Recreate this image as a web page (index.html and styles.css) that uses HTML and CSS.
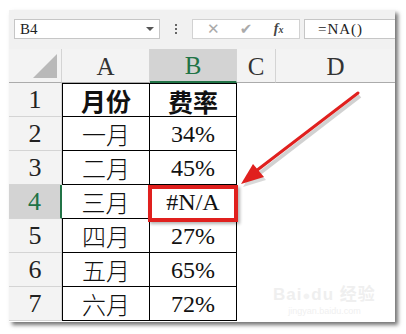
FILE: index.html
```html
<!DOCTYPE html>
<html lang="zh-CN">
<head>
    <meta charset="UTF-8">
    <meta name="viewport" content="width=device-width, initial-scale=1.0">
    <title>NA 函数</title>
    <link rel="stylesheet" href="styles.css">
</head>
<body>
    <div class="panel">
        <div class="toolbar">
            <div class="namebox">
                <span>B4</span>
                <i class="caret"></i>
            </div>
            <div class="dots"><b></b><b></b><b></b></div>
            <div class="btns">
                <span class="ico x">✕</span>
                <span class="ico ok">✔</span>
                <span class="ico fx">f<small>x</small></span>
            </div>
            <div class="formula">=NA()</div>
        </div>

        <div class="sheet">
            <div class="corner"><i></i></div>
            <div class="colhead">A</div>
            <div class="colhead sel">B</div>
            <div class="colhead">C</div>
            <div class="colhead last">D</div>

            <div class="rowhead">1</div>
            <div class="cell a top bold">月份</div>
            <div class="cell b top bold">费率</div>
            <div class="empty"></div><div class="empty"></div>

            <div class="rowhead">2</div>
            <div class="cell a">一月</div>
            <div class="cell b">34%</div>
            <div class="empty"></div><div class="empty"></div>

            <div class="rowhead">3</div>
            <div class="cell a">二月</div>
            <div class="cell b">45%</div>
            <div class="empty"></div><div class="empty"></div>

            <div class="rowhead sel">4</div>
            <div class="cell a nol">三月</div>
            <div class="cell b">#N/A</div>
            <div class="empty"></div><div class="empty"></div>

            <div class="rowhead">5</div>
            <div class="cell a">四月</div>
            <div class="cell b">27%</div>
            <div class="empty"></div><div class="empty"></div>

            <div class="rowhead">6</div>
            <div class="cell a">五月</div>
            <div class="cell b">65%</div>
            <div class="empty"></div><div class="empty"></div>

            <div class="rowhead">7</div>
            <div class="cell a">六月</div>
            <div class="cell b">72%</div>
            <div class="empty"></div><div class="empty"></div>
        </div>

        <div class="redbox"></div>

        <div class="mark">
            <div class="mark-top">Bai<span class="paw">●</span>du 经验</div>
            <div class="mark-sub">jingyan.baidu.com</div>
        </div>
    </div>

    <svg class="arrow" width="406" height="334" viewBox="0 0 406 334">
        <line x1="360" y1="96" x2="260" y2="173" stroke="#000" stroke-opacity="0.18" stroke-width="4"/>
        <polygon points="243,187 255,167 266,180" fill="#000" fill-opacity="0.15"/>
        <line x1="358" y1="93" x2="256" y2="171" stroke="#e0201e" stroke-width="3" stroke-linecap="round"/>
        <polygon points="241,184 253,164 264,177" fill="#e0201e"/>
    </svg>
</body>
</html>
```

FILE: styles.css
```css
* { margin:0; padding:0; box-sizing:border-box;}
body { background:#fff; width:406px; height:334px; overflow:hidden; position:relative; font-family:"Liberation Serif", "Times New Roman", serif;}

.panel { position:relative; margin:10px 0 0 9px; width:386px; height:312px; background:#fff; overflow:hidden; box-shadow:3px 3px 4px rgba(0,0,0,0.55);}

/* formula bar */
.toolbar { height:39px; background:#f1f1f1; display:flex; align-items:flex-start; padding:9px 0 0 5px;}
.namebox { width:146px; height:20px; background:#fff; border:1px solid #c6c6c6; display:flex; align-items:center; justify-content:space-between; padding:0 5px 0 5px; font-size:15px; color:#222;}
.caret { width:0; height:0; border-left:4px solid transparent; border-right:4px solid transparent; border-top:4px solid #555;}
.dots { width:32px; height:20px; display:flex; flex-direction:column; align-items:center; justify-content:center; gap:2px;}
.dots b { width:2px; height:2px; background:#666;}
.btns { width:108px; height:20px; background:#fff; border:1px solid #d2d2d2; display:flex; align-items:center; justify-content:space-around; padding:0 4px;}
.ico { font-family:"DejaVu Sans", sans-serif; font-size:15px; color:#aaa; width:24px; text-align:center;}
.ico.fx { font-family:"Liberation Serif", serif; font-style:italic; font-weight:bold; font-size:14px; color:#444;}
.ico.fx small { font-size:10px;}
.formula { flex:1; height:20px; margin-left:4px; background:#fff; border:1px solid #c6c6c6; border-right:none; padding-left:13px; font-size:15px; line-height:18px; color:#222; letter-spacing:1px;}

/* grid */
.sheet { display:grid; grid-template-columns:53px 88px 87px 39px 119px; grid-auto-rows:34px;}
.corner { background:#f3f3f3; border-right:1px solid #d4d4d4; border-bottom:1px solid #ababab; position:relative;}
.corner i { position:absolute; right:4px; bottom:4px; width:0; height:0; border-left:24px solid transparent; border-bottom:24px solid #b9b9b9;}
.colhead { background:#f3f3f3; border-right:1px solid #d4d4d4; border-bottom:1px solid #ababab; display:flex; align-items:center; justify-content:center; font-size:25px; color:#333; padding-top:2px;}
.colhead.sel { background:#d3d3d3; color:#217346; border-bottom:2px solid #217346;}
.colhead.last { border-right:none;}
.rowhead { background:#f3f3f3; border-right:1px solid #d4d4d4; border-bottom:1px solid #d4d4d4; display:flex; align-items:center; justify-content:center; font-size:26px; color:#222;}
.rowhead.sel { background:#d3d3d3; color:#217346; border-right:2px solid #217346;}

.cell { border-right:1px solid #000; border-bottom:1px solid #000; display:flex; align-items:center; justify-content:center; font-size:24px; color:#111;}
.cell.a { border-left:1px solid #000; font-family:"Noto Sans CJK SC", sans-serif; font-weight:300; font-size:24px;}
.cell.a.nol { border-left:none;}
.cell.top { border-top:1px solid #000;}
.cell.bold { font-family:"Noto Sans CJK SC", sans-serif; font-weight:700; font-size:25px;}
.cell.b { padding-top:2px;}
.empty { background:#fff;}

/* annotation */
.redbox { position:absolute; left:139px; top:175px; width:90px; height:37px; border:4px solid #e0201e; box-shadow:2px 2px 3px rgba(0,0,0,0.3);}
.arrow { position:absolute; left:0; top:0; pointer-events:none;}

.mark { position:absolute; left:264px; top:270px; color:#efefef; font-family:"Liberation Sans", "Noto Sans CJK SC", sans-serif; text-align:center;}
.mark-top { font-size:17px; font-weight:bold; letter-spacing:1px;}
.paw { font-size:13px; color:#f2f2f2;}
.mark-sub { font-size:9px; margin-top:1px; color:#f0f0f0;}
```
